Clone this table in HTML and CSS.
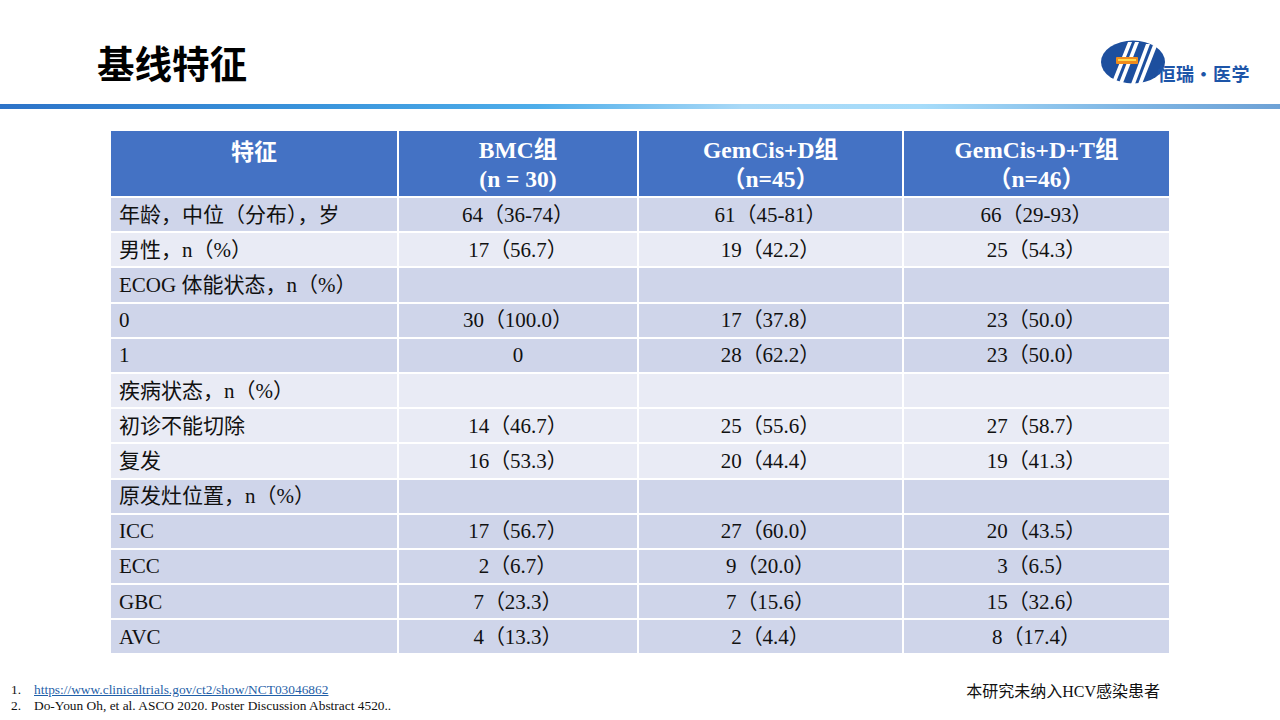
FILE: index.html
```html
<!DOCTYPE html>
<html lang="zh-CN">
<head>
<meta charset="utf-8">
<title>基线特征</title>
<link rel="stylesheet" href="styles.css">
</head>
<body>
<div class="slide">
  <header class="top">
    <h1 class="title">基线特征</h1>
    <div class="logo">
      <svg class="logo-mark" width="66" height="48" viewBox="0 0 66 48" aria-hidden="true">
        <ellipse cx="33" cy="25" rx="32" ry="21.5" fill="#1d4f9e"/>
        <polygon points="12,45 16,45 32,5 28,5" fill="#fff"/>
        <polygon points="19,46 23,46 39,5 35,5" fill="#fff"/>
        <polygon points="31,47 35,47 50,7 46,7" fill="#fff"/>
        <polygon points="38,47 42,47 57,9 53,8" fill="#fff"/>
        <path d="M49,0 L52,8 L56,3 L60,11 L63,6 L66,9 L66,0 Z" fill="#fff"/>
        <rect x="16" y="20" width="22" height="7" rx="1" fill="#f08c1c"/>
        <rect x="18" y="22" width="18" height="2" fill="#ffd84a"/>
      </svg>
      <span class="logo-text">恒瑞·医学</span>
    </div>
  </header>
  <div class="rule"></div>

  <table class="data">
    <colgroup>
      <col class="c1"><col class="c2"><col class="c3"><col class="c4">
    </colgroup>
    <thead>
      <tr>
        <th class="zh">特征</th>
        <th>BMC组<br>(n = 30)</th>
        <th>GemCis+D组<br>（n=45）</th>
        <th>GemCis+D+T组<br>（n=46）</th>
      </tr>
    </thead>
    <tbody>
      <tr class="dk"><td>年龄，中位（分布），岁</td><td>64（36-74）</td><td>61（45-81）</td><td>66（29-93）</td></tr>
      <tr class="lt"><td>男性，n（%）</td><td>17（56.7）</td><td>19（42.2）</td><td>25（54.3）</td></tr>
      <tr class="dk"><td>ECOG 体能状态，n（%）</td><td></td><td></td><td></td></tr>
      <tr class="dk"><td>0</td><td>30（100.0）</td><td>17（37.8）</td><td>23（50.0）</td></tr>
      <tr class="dk"><td>1</td><td>0</td><td>28（62.2）</td><td>23（50.0）</td></tr>
      <tr class="lt"><td>疾病状态，n（%）</td><td></td><td></td><td></td></tr>
      <tr class="lt"><td>初诊不能切除</td><td>14（46.7）</td><td>25（55.6）</td><td>27（58.7）</td></tr>
      <tr class="lt"><td>复发</td><td>16（53.3）</td><td>20（44.4）</td><td>19（41.3）</td></tr>
      <tr class="dk"><td>原发灶位置，n（%）</td><td></td><td></td><td></td></tr>
      <tr class="dk"><td>ICC</td><td>17（56.7）</td><td>27（60.0）</td><td>20（43.5）</td></tr>
      <tr class="dk"><td>ECC</td><td>2（6.7）</td><td>9（20.0）</td><td>3（6.5）</td></tr>
      <tr class="dk"><td>GBC</td><td>7（23.3）</td><td>7（15.6）</td><td>15（32.6）</td></tr>
      <tr class="dk"><td>AVC</td><td>4（13.3）</td><td>2（4.4）</td><td>8（17.4）</td></tr>
    </tbody>
  </table>

  <footer class="foot">
    <div class="refs">
      <div class="ref"><span class="num">1.</span><a href="#">https://www.clinicaltrials.gov/ct2/show/NCT03046862</a></div>
      <div class="ref"><span class="num">2.</span><span>Do-Youn Oh, et al. ASCO 2020. Poster Discussion Abstract 4520..</span></div>
    </div>
    <p class="note">本研究未纳入HCV感染患者</p>
  </footer>
</div>
</body>
</html>
```

FILE: styles.css
```css
* { box-sizing: border-box; }
html, body { margin: 0; padding: 0; background: #fff; }
body {
  width: 1280px;
  height: 720px;
  overflow: hidden;
  font-family: "Liberation Serif", "Noto Sans CJK SC", serif;
  color: #111;
}
.slide { width: 1280px; height: 720px; display: flex; flex-direction: column; }

.top {
  height: 104px;
  display: flex;
  justify-content: space-between;
  align-items: flex-start;
  padding: 0 30px 0 97px;
}
.title {
  margin: 42px 0 0 0;
  font-family: "Noto Sans CJK SC", sans-serif;
  font-weight: 700;
  font-size: 37.5px;
  line-height: 40px;
  color: #000;
}
.logo {
  margin-top: 37px;
  display: flex;
  align-items: flex-end;
}
.logo-mark { display: block; }
.logo-text {
  margin-left: -8px;
  margin-bottom: 1px;
  font-family: "Noto Sans CJK SC", sans-serif;
  font-weight: 700;
  font-size: 18px;
  line-height: 22px;
  color: #1d55a8;
  letter-spacing: 0.5px;
}

.rule {
  height: 5px;
  background: linear-gradient(90deg, #2d73c8 0%, #3a95dc 25%, #4eaeea 42%, #a9d9f7 58%, #a6dcfa 72%, #7fb6e4 88%, #6ea2d6 100%);
}

.data {
  margin: 22px 0 0 111px;
  width: 1058px;
  table-layout: fixed;
  border-collapse: collapse;
  font-size: 21px;
}
.c1 { width: 287px; }
.c2 { width: 240px; }
.c3 { width: 265px; }
.c4 { width: 266px; }

.data th, .data td { border: 2px solid #fff; }
.data tr:first-child th { border-top: 0; }
.data th:first-child, .data td:first-child { border-left: 0; }
.data th:last-child, .data td:last-child { border-right: 0; }

.data th {
  height: 66px;
  background: #4472c4;
  color: #fff;
  font-weight: 700;
  font-size: 23.5px;
  line-height: 29px;
  vertical-align: top;
  padding: 5px 4px 0;
  text-align: center;
}
.data th.zh { font-family: "Noto Sans CJK SC", sans-serif; font-size: 23px; }

.data td {
  height: 35.2px;
  padding: 0 8px;
  line-height: 24px;
  text-align: center;
  vertical-align: middle;
  white-space: nowrap;
}
.data td:first-child { text-align: left; }
.dk td { background: #cfd5ea; }
.lt td { background: #e9ebf5; }

.foot {
  margin-top: 27px;
  display: flex;
  justify-content: space-between;
  align-items: flex-start;
  padding-right: 120px;
}
.refs {
  padding-left: 11px;
  font-size: 13.4px;
  line-height: 16px;
  color: #111;
}
.ref { display: flex; }
.num { width: 23px; flex: none; }
.refs a { color: #1f5fa8; text-decoration: underline; }
.note {
  margin: 0;
  font-size: 16px;
  line-height: 20px;
  color: #111;
}
```
